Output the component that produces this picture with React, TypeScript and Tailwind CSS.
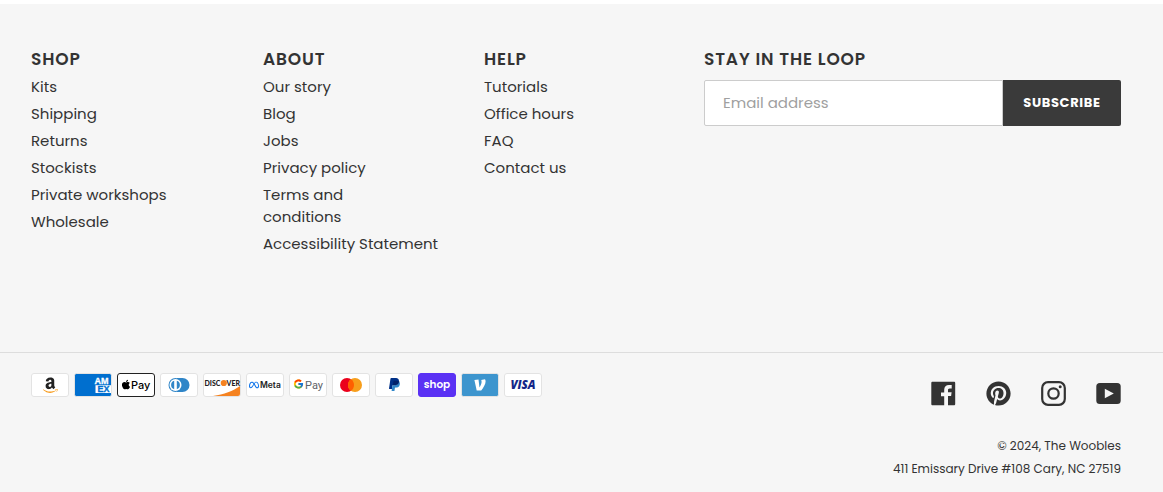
import type { ReactNode } from "react";
import { FaAmazon, FaApple, FaPinterest } from "react-icons/fa";
import { FcGoogle } from "react-icons/fc";
import { FaMeta } from "react-icons/fa6";

type LinkColumn = { title: string; links: ReactNode[] };

const columns: LinkColumn[] = [
  {
    title: "SHOP",
    links: ["Kits", "Shipping", "Returns", "Stockists", "Private workshops", "Wholesale"],
  },
  {
    title: "ABOUT",
    links: [
      "Our story",
      "Blog",
      "Jobs",
      "Privacy policy",
      <>
        Terms and
        <br />
        conditions
      </>,
      "Accessibility Statement",
    ],
  },
  { title: "HELP", links: ["Tutorials", "Office hours", "FAQ", "Contact us"] },
];

function Heading({ children }: { children: ReactNode }) {
  return <h2 className="text-[17px] leading-6 font-semibold tracking-wider text-[#333]">{children}</h2>;
}

function Card({
  label,
  fill = "#fff",
  stroke = "#e3e3e3",
  children,
}: {
  label: string;
  fill?: string;
  stroke?: string;
  children: ReactNode;
}) {
  return (
    <li>
      <svg viewBox="0 0 38 24" className="block h-6 w-[38px]" role="img" aria-label={label}>
        <rect x="0.5" y="0.5" width="37" height="23" rx="2.5" fill={fill} stroke={stroke} />
        {children}
      </svg>
    </li>
  );
}

function Payments() {
  return (
    <ul className="flex flex-wrap gap-[5px]" aria-label="Payment methods">
      <Card label="Amazon">
        <linearGradient id="amazon-fill" x1="0" y1="0" x2="0" y2="1">
          <stop offset="0.75" stopColor="#222" />
          <stop offset="0.75" stopColor="#f79c1d" />
        </linearGradient>
        <FaAmazon x="10.5" y="3.5" size="17.5" fill="url(#amazon-fill)" />
      </Card>
      <Card label="American Express" fill="#006fcf">
        <rect x="1" y="1" width="36" height="22" rx="2" fill="#006fcf" />
        <rect x="21.500" y="12.2" width="15.500" height="7.800" fill="#fff" />
        <g fontSize="9" fontWeight="700" className="font-['Liberation_Sans',sans-serif]">
          <text x="20.500" y="10.900" fill="#fff" stroke="#fff" strokeWidth="0.3">AM</text>
          <text x="23.500" y="19.300" fill="#006fcf" stroke="#006fcf" strokeWidth="0.3">EX</text>
        </g>
      </Card>
      <Card label="Apple Pay" stroke="#222">
        <FaApple x="3.500" y="6" size="11" color="#000" />
        <text x="14" y="16" fontSize="11" fontWeight="500" fill="#000" className="font-['Inter',sans-serif]">
          Pay
        </text>
      </Card>
      <Card label="Diners Club">
        <path d="M17 5h5.500a7 7 0 0 1 0 14H17z" fill="#3086c8" />
        <circle cx="15.500" cy="12" r="7" fill="#3086c8" />
        <circle cx="15.500" cy="12" r="6" fill="#fff" />
        <path d="M14.200 7.800a4.400 4.400 0 0 0 0 8.400zM16.800 7.800a4.400 4.400 0 0 1 0 8.400z" fill="#3086c8" />
      </Card>
      <Card label="Discover">
        <path d="M37 13v8a2 2 0 0 1-2 2H10c11-1.600 20-5 27-10z" fill="#f58220" />
        <g fontSize="7" fontWeight="900" fill="#222" className="font-['Lato',sans-serif]">
          <text x="1.500" y="12.500">DISC</text>
          <text x="23.500" y="12.500">VER</text>
        </g>
        <circle cx="20.800" cy="10" r="3.100" fill="#f58220" />
      </Card>
      <Card label="Meta Pay">
        <FaMeta x="3" y="7" size="10" color="#0a72ea" />
        <text x="14" y="15" fontSize="8.500" fontWeight="600" fill="#222" className="font-['Inter',sans-serif]">
          Meta
        </text>
      </Card>
      <Card label="Google Pay">
        <FcGoogle x="4" y="5.500" size="11" />
        <text x="16" y="15.500" fontSize="11" fill="#5f6368" className="font-['Roboto',sans-serif]">
          Pay
        </text>
      </Card>
      <Card label="Mastercard">
        <circle cx="15" cy="12" r="7" fill="#eb001b" />
        <circle cx="23" cy="12" r="7" fill="#f79e1b" />
        <path d="M19 6.260a7 7 0 0 1 0 11.480 7 7 0 0 1 0-11.480z" fill="#ff5f00" />
      </Card>
      <Card label="PayPal">
        <path d="M23.900 8.300c.2-1 0-1.700-.6-2.300-.6-.7-1.700-1-3.100-1h-4.100c-.3 0-.5.2-.6.500L14 15.600c0 .2.100.4.300.4H17l.4-3.400z" fill="#003087" />
        <path d="m23.900 8.300-.2.200c-.5 2.800-2.200 3.800-4.600 3.800H18c-.3 0-.5.200-.6.500l-.6 3.900-.2 1c0 .200.1.400.3.400H19c.3 0 .5-.2.500-.4l.4-2.700c0-.2.3-.4.500-.4h.3c2.100 0 3.700-.8 4.100-3.200.200-1 .1-1.800-.4-2.400-.1-.3-.3-.500-.5-.7z" fill="#3086c8" />
        <path d="M23.300 8.100c-.9-.3-1.500-.3-4.100-.3-.4 0-.6.100-.7.500l-.8 4.400c.1-.3.3-.5.600-.5h1.300c2.400 0 4.100-1 4.600-3.800l.1-.1z" fill="#012169" />
      </Card>
      <Card label="Shop Pay" fill="#5a31f4" stroke="#5a31f4">
        <text x="19" y="15" textAnchor="middle" fontSize="10.500" fontWeight="600" fill="#fff" className="font-['Poppins',sans-serif]">
          shop
        </text>
      </Card>
      <Card label="Venmo" fill="#3d95ce">
        <rect x="1" y="1" width="36" height="22" rx="2" fill="#3d95ce" />
        <path d="M24 6.200c.4.700.6 1.400.6 2.300 0 2.800-2.400 6.500-4.400 9.100h-4.500L13.400 7l4.100-.4 1 7.800c.9-1.500 2.100-3.900 2.100-5.500 0-.9-.2-1.500-.4-2z" fill="#fff" />
      </Card>
      <Card label="Visa">
        <text x="19" y="16" textAnchor="middle" fontSize="11.500" fontWeight="800" fontStyle="italic" fill="#142688" className="font-['Open_Sans',sans-serif]">
          VISA
        </text>
      </Card>
    </ul>
  );
}

function Socials() {
  return (
    <ul className="flex gap-[30px] text-[#333]">
      <li>
        <a href="#facebook" aria-label="Facebook">
          <svg viewBox="0 0 25 25" className="block size-[25px]" fill="currentColor" aria-hidden="true">
            <path d="M1.600.7h21.300c.8 0 1.300.5 1.300 1.300v21c0 .8-.5 1.300-1.300 1.300H17v-9.300h3.100l.5-3.700H17V9.200c0-1.100.3-1.800 1.800-1.800h1.900V4.100c-.3 0-1.500-.1-2.800-.1-2.800 0-4.700 1.700-4.700 4.800v2.700H10v3.700h3.200v9.100H1.600c-.8 0-1.300-.5-1.300-1.300V2c0-.8.5-1.300 1.300-1.300z" />
          </svg>
        </a>
      </li>
      <li>
        <a href="#pinterest" aria-label="Pinterest">
          <FaPinterest className="block size-[25px]" aria-hidden="true" />
        </a>
      </li>
      <li>
        <a href="#instagram" aria-label="Instagram">
          <svg viewBox="0 0 25 25" className="block size-[25px]" fill="none" stroke="currentColor" aria-hidden="true">
            <rect x="1.200" y="1.200" width="22.600" height="22.600" rx="5.800" strokeWidth="2.200" />
            <circle cx="12.500" cy="12.500" r="5.200" strokeWidth="2.200" />
            <circle cx="19.200" cy="5.800" r="1.500" fill="currentColor" stroke="none" />
          </svg>
        </a>
      </li>
      <li>
        <a href="#youtube" aria-label="YouTube">
          <svg viewBox="0 0 25 25" className="block size-[25px]" aria-hidden="true">
            <rect x="0.300" y="2" width="24.400" height="21" rx="3.500" fill="currentColor" />
            <path d="M8.800 7.800v9.400l9-4.700z" fill="#f6f6f6" />
          </svg>
        </a>
      </li>
    </ul>
  );
}

export default function App() {
  return (
    <div className="flex min-h-screen flex-col bg-white pt-1 font-['Poppins','Inter',sans-serif] text-[#333]">
      <footer className="grow bg-[#f6f6f6]">
        <div className="grid grid-cols-[232fr_221fr_220fr_417fr] pr-[42px] pb-[97px] pl-[31px] pt-[43px]">
          {columns.map((column) => (
            <nav key={column.title} aria-label={column.title}>
              <Heading>{column.title}</Heading>
              <ul className="mt-[5px] flex flex-col gap-[5px] text-[15px] leading-[22px] whitespace-nowrap">
                {column.links.map((link, i) => (
                  <li key={i}>
                    <a href="#" className="block hover:underline">
                      {link}
                    </a>
                  </li>
                ))}
              </ul>
            </nav>
          ))}
          <section className="min-w-0">
            <Heading>STAY IN THE LOOP</Heading>
            <form className="mt-[9px] flex h-[46px]" onSubmit={(e) => e.preventDefault()}>
              <input
                type="email"
                aria-label="Email address"
                placeholder="Email address"
                className="w-0 min-w-0 grow rounded-l-xs border border-[#ccc] bg-white px-[18px] text-[15px] placeholder:text-[#a0a0a0]"
              />
              <button type="submit" className="w-[118px] rounded-r-xs bg-[#3a3a3a] text-[13px] font-bold tracking-wider text-white">
                SUBSCRIBE
              </button>
            </form>
          </section>
        </div>
        <div className="flex justify-between border-t border-[#ddd] pt-5 pr-[42px] pb-3 pl-[31px]">
          <Payments />
          <div className="flex flex-col items-end pt-2">
            <Socials />
            <div className="mt-7 text-right text-xs leading-[23px]">
              <p>
                © 2024, <a href="#">The Woobles</a>
              </p>
              <p>411 Emissary Drive #108 Cary, NC 27519</p>
            </div>
          </div>
        </div>
      </footer>
    </div>
  );
}
